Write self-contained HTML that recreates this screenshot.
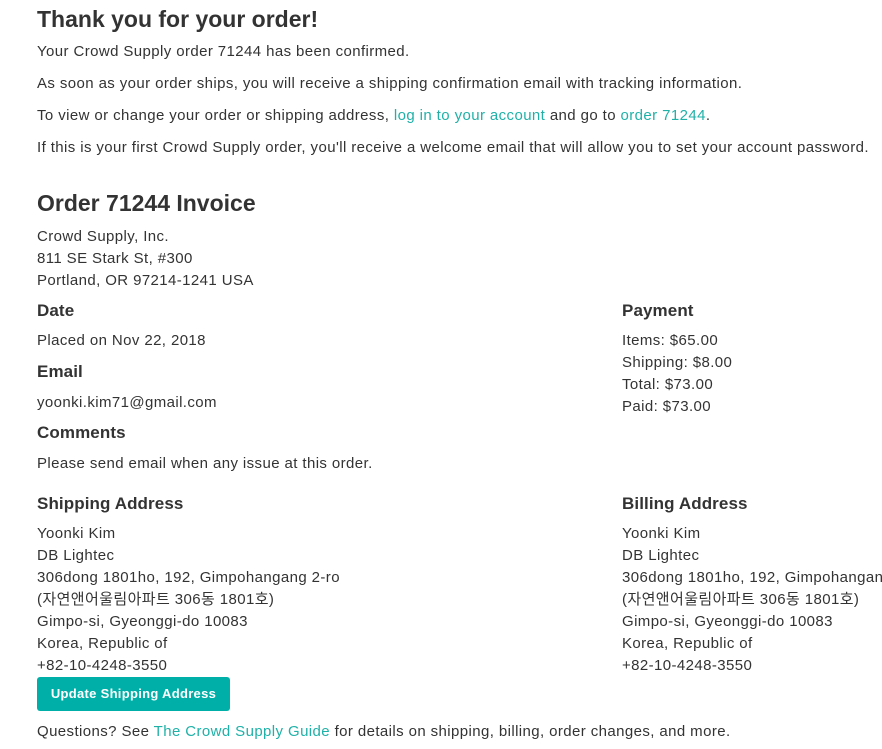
<!DOCTYPE html>
<html><head><meta charset="utf-8"><style>
body{margin:0;width:882px;height:749px;overflow:hidden;background:#fff;font-family:"Liberation Sans","Noto Sans CJK KR",sans-serif;color:#333;font-size:15px;letter-spacing:0.4px}
div{position:absolute;white-space:nowrap;line-height:22px;}
a{color:#1fb1a8;text-decoration:none}
.h1{font-size:23px;font-weight:bold;line-height:30px;letter-spacing:0}
.h3{font-size:17px;font-weight:bold;letter-spacing:0.1px}
.btn{background:#00b0a8;color:#fff;font-weight:bold;font-size:13px;letter-spacing:0.3px;border-radius:3px;width:193px;height:34px;line-height:34px;text-align:center}
</style></head><body>
<div class="h1" style="left:37px;top:4px">Thank you for your order!</div>
<div style="left:37px;top:41px">Your Crowd Supply order 71244 has been confirmed.</div>
<div style="left:37px;top:73px">As soon as your order ships, you will receive a shipping confirmation email with tracking information.</div>
<div style="left:37px;top:105px">To view or change your order or shipping address, <a>log in to your account</a> and go to <a>order 71244</a>.</div>
<div style="left:37px;top:137px">If this is your first Crowd Supply order, you'll receive a welcome email that will allow you to set your account password.</div>
<div class="h1" style="left:37px;top:188px">Order 71244 Invoice</div>
<div style="left:37px;top:226px">Crowd Supply, Inc.<br>811 SE Stark St, #300<br>Portland, OR 97214-1241 USA</div>
<div class="h3" style="left:37px;top:300px">Date</div>
<div style="left:37px;top:330px">Placed on Nov 22, 2018</div>
<div class="h3" style="left:37px;top:361px">Email</div>
<div style="left:37px;top:392px">yoonki.kim71@gmail.com</div>
<div class="h3" style="left:37px;top:422px">Comments</div>
<div style="left:37px;top:453px">Please send email when any issue at this order.</div>
<div class="h3" style="left:622px;top:300px">Payment</div>
<div style="left:622px;top:330px">Items: $65.00<br>Shipping: $8.00<br>Total: $73.00<br>Paid: $73.00</div>
<div class="h3" style="left:37px;top:493px">Shipping Address</div>
<div style="left:37px;top:523px">Yoonki Kim<br>DB Lightec<br>306dong 1801ho, 192, Gimpohangang 2-ro<br>(자연앤어울림아파트 306동 1801호)<br>Gimpo-si, Gyeonggi-do 10083<br>Korea, Republic of<br>+82-10-4248-3550</div>
<div class="h3" style="left:622px;top:493px">Billing Address</div>
<div style="left:622px;top:523px">Yoonki Kim<br>DB Lightec<br>306dong 1801ho, 192, Gimpohangang 2-ro<br>(자연앤어울림아파트 306동 1801호)<br>Gimpo-si, Gyeonggi-do 10083<br>Korea, Republic of<br>+82-10-4248-3550</div>
<div class="btn" style="left:37px;top:677px">Update Shipping Address</div>
<div style="left:37px;top:721px">Questions? See <a>The Crowd Supply Guide</a> for details on shipping, billing, order changes, and more.</div>
</body></html>
